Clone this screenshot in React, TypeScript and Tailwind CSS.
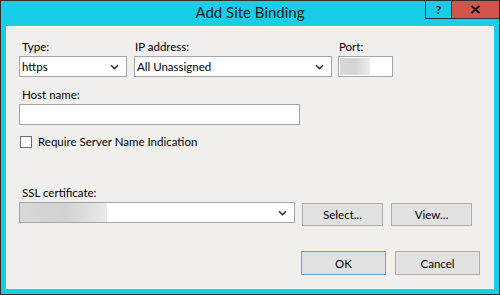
const FONT = { fontFamily: 'Lato, "Noto Sans", sans-serif' };

function Chevron() {
  return (
    <svg width="9" height="6" viewBox="0 0 9 6" className="shrink-0">
      <path d="M1 1.2 L4.5 4.6 L8 1.2" fill="none" stroke="#333" strokeWidth="1.6" />
    </svg>
  );
}

function Select({ width, children }: { width: string; children?: React.ReactNode }) {
  return (
    <div className={`${width} h-[21px] flex items-center justify-between bg-white border border-[#a5a5a5] pr-[7px]`}>
      <div className="flex-1 min-w-0 h-full flex items-center">{children}</div>
      <Chevron />
    </div>
  );
}

function Button({ label, primary, className }: { label: string; primary?: boolean; className?: string }) {
  return (
    <div
      className={`flex items-center justify-center bg-[#e1e1e1] border text-[11.5px] text-[#000] ${
        primary ? 'border-[#5aa7dc]' : 'border-[#adadad]'
      } ${className ?? ''}`}
    >
      {label}
    </div>
  );
}

export default function App() {
  return (
    <div style={FONT} className="w-[500px] h-[295px] bg-[#17cde8] border border-[#2e2e2e] flex flex-col relative">
      {/* title bar */}
      <div className="h-[25px] flex items-center justify-center text-[15px] text-[#1a1a1a] pb-[2px]">
        Add Site Binding
      </div>
      <div className="absolute top-0 right-0 flex h-[18px]">
        <div className="w-[27px] h-full border-x border-b border-[#2e2e2e] flex items-center justify-center text-[12px] font-bold text-[#111]">
          ?
        </div>
        <div className="w-[47px] h-full bg-[#d2554b] border-b border-[#2e2e2e] flex items-center justify-center">
          <svg width="11" height="9" viewBox="0 0 11 9">
            <path d="M1.5 1 L9.5 8 M9.5 1 L1.5 8" stroke="#1c1c1c" strokeWidth="2.2" />
          </svg>
        </div>
      </div>

      {/* client area */}
      <div className="flex-1 mx-[5px] mb-[5px] bg-[#f0efed] border border-[#fafafa] flex flex-col pl-[12px] text-[11.5px] text-[#000]">
        {/* row 1 */}
        <div className="flex mt-[11px] gap-[7px]">
          <div className="flex flex-col">
            <span className="pl-[3px] h-[18px] leading-[18px]">Type:</span>
            <Select width="w-[108px]">
              <span className="pl-[2px]">https</span>
            </Select>
          </div>
          <div className="flex flex-col">
            <span className="pl-[1px] h-[18px] leading-[18px]">IP address:</span>
            <Select width="w-[198px]">
              <span className="pl-[2px]">All Unassigned</span>
            </Select>
          </div>
          <div className="flex flex-col ml-[-1px]">
            <span className="pl-[1px] h-[18px] leading-[18px]">Port:</span>
            <div className="w-[55px] h-[21px] bg-white border border-[#a5a5a5] flex items-center pl-[1px]">
              <div className="w-[30px] h-[17px] bg-gradient-to-r from-[#d9d9d9] via-[#d4d4d4] to-[#ececec]" />
            </div>
          </div>
        </div>

        {/* host name */}
        <span className="pl-[3px] mt-[9px] h-[18px] leading-[18px]">Host name:</span>
        <div className="w-[281px] h-[21px] bg-white border border-[#a5a5a5]" />

        {/* SNI */}
        <div className="flex items-center mt-[8px] pl-[1px] gap-[6px]">
          <div className="w-[12px] h-[12px] bg-white border border-[#6f6f6f]" />
          <span>Require Server Name Indication</span>
        </div>

        {/* SSL */}
        <span className="pl-[3px] mt-[34px] h-[18px] leading-[18px]">SSL certificate:</span>
        <div className="flex items-start">
          <Select width="w-[276px]">
            <div className="w-[87px] h-full bg-gradient-to-r from-[#d8d8d8] via-[#d2d2d2] to-[#e9e9e9]" />
          </Select>
          <Button label="Select..." className="ml-[7px] mt-[1px] w-[81px] h-[23px]" />
          <Button label="View..." className="ml-[8px] mt-[1px] w-[81px] h-[23px]" />
        </div>

        {/* OK / Cancel */}
        <div className="flex mt-[25px] pl-[282px] gap-[9px]">
          <Button label="OK" primary className="w-[85px] h-[24px]" />
          <Button label="Cancel" className="w-[85px] h-[24px]" />
        </div>
      </div>
    </div>
  );
}
